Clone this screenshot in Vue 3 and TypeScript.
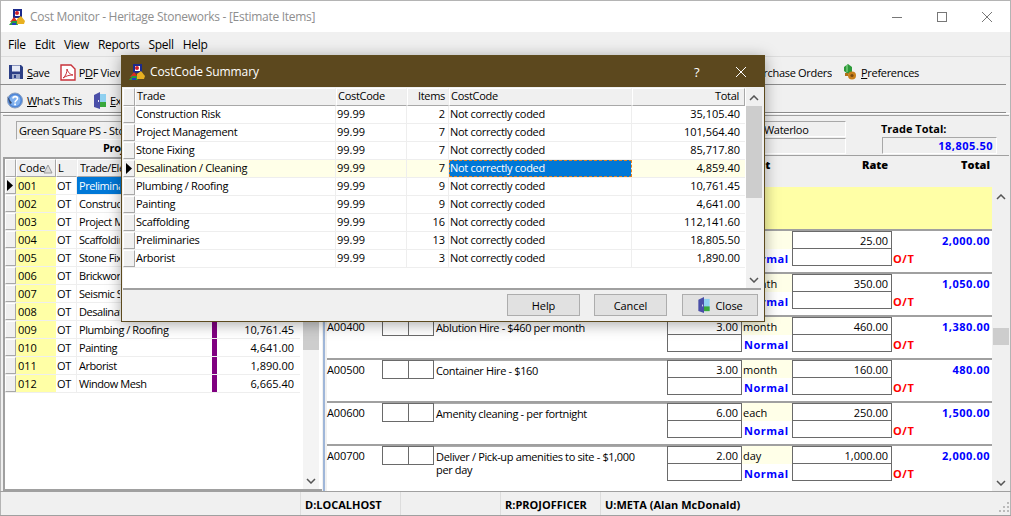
<script setup lang="ts">
interface Trade { code: string; name: string; total: string }
const trades: Trade[] = [
  { code: '001', name: 'Preliminaries', total: '' },
  { code: '002', name: 'Construction Risk', total: '' },
  { code: '003', name: 'Project Management', total: '' },
  { code: '004', name: 'Scaffolding', total: '' },
  { code: '005', name: 'Stone Fixing', total: '' },
  { code: '006', name: 'Brickwork', total: '' },
  { code: '007', name: 'Seismic Strengthening', total: '' },
  { code: '008', name: 'Desalination / Cleaning', total: '' },
  { code: '009', name: 'Plumbing / Roofing', total: '10,761.45' },
  { code: '010', name: 'Painting', total: '4,641.00' },
  { code: '011', name: 'Arborist', total: '1,890.00' },
  { code: '012', name: 'Window Mesh', total: '6,665.40' },
]
interface Item { code: string; desc: string; qty: string; unit: string; rate: string; total: string; flags: boolean }
const items: Item[] = [
  { code: '', desc: '', qty: '', unit: '', rate: '25.00', total: '2,000.00', flags: false },
  { code: '', desc: '', qty: '', unit: 'month', rate: '350.00', total: '1,050.00', flags: false },
  { code: 'A00400', desc: 'Ablution Hire - $460 per month', qty: '3.00', unit: 'month', rate: '460.00', total: '1,380.00', flags: true },
  { code: 'A00500', desc: 'Container Hire - $160', qty: '3.00', unit: 'month', rate: '160.00', total: '480.00', flags: true },
  { code: 'A00600', desc: 'Amenity cleaning - per fortnight', qty: '6.00', unit: 'each', rate: '250.00', total: '1,500.00', flags: true },
  { code: 'A00700', desc: 'Deliver / Pick-up amenities to site - $1,000 per day', qty: '2.00', unit: 'day', rate: '1,000.00', total: '2,000.00', flags: true },
]
interface Summary { trade: string; items: number; total: string }
const summary: Summary[] = [
  { trade: 'Construction Risk', items: 2, total: '35,105.40' },
  { trade: 'Project Management', items: 7, total: '101,564.40' },
  { trade: 'Stone Fixing', items: 7, total: '85,717.80' },
  { trade: 'Desalination / Cleaning', items: 7, total: '4,859.40' },
  { trade: 'Plumbing / Roofing', items: 9, total: '10,761.45' },
  { trade: 'Painting', items: 9, total: '4,641.00' },
  { trade: 'Scaffolding', items: 16, total: '112,141.60' },
  { trade: 'Preliminaries', items: 13, total: '18,805.50' },
  { trade: 'Arborist', items: 3, total: '1,890.00' },
]
</script>

<template>
  <div class="win">
    <header class="title">
      <svg class="appicon" width="16" height="16" viewBox="0 0 16 16"><rect x="4" y="0" width="9" height="9" fill="#1c2a8c"/><rect x="6" y="2" width="5" height="5" fill="#fff"/><circle cx="8" cy="4" r="2" fill="#d0202a"/><path d="M1 13 L5 8 L9 13Z" fill="#d83020"/><path d="M0 16 L3 12 L8 12 L9 16Z" fill="#2a9a40"/><path d="M3 16 h4 v-2 h-4z" fill="#2040c0"/><path d="M8 10 L12 7 L16 12 L15 15 L8 15Z" fill="#e8b020"/></svg>
      <span class="title-text">Cost Monitor - Heritage Stoneworks - [Estimate Items]</span>
      <div class="caps">
        <svg width="12" height="12" viewBox="0 0 12 12"><path d="M1 6.500h10" stroke="#777" fill="none"/></svg>
        <svg width="12" height="12" viewBox="0 0 12 12"><rect x="1.500" y="1.500" width="9" height="9" stroke="#777" fill="none"/></svg>
        <svg width="12" height="12" viewBox="0 0 12 12"><path d="M1 1l10 10M11 1L1 11" stroke="#777" fill="none"/></svg>
      </div>
    </header>

    <nav class="menu">
      <span>File</span><span>Edit</span><span>View</span><span>Reports</span><span>Spell</span><span>Help</span>
    </nav>

    <div class="bar bar1">
      <div class="tool">
        <svg width="16" height="16" viewBox="0 0 16 16"><path d="M1 1h12l2 2v12H1z" fill="#2c3f86"/><rect x="4" y="1.500" width="8" height="6" fill="#e8ecf6"/><rect x="4" y="10" width="8" height="5" fill="#9aa6c8"/><rect x="6" y="11" width="2" height="3" fill="#2c3f86"/></svg>
        <span><u>S</u>ave</span>
      </div>
      <div class="tool pdf">
        <svg width="16" height="17" viewBox="0 0 16 17"><path d="M1 1h10l4 4v11H1z" fill="#fff" stroke="#c8323a" stroke-width="1.400"/><path d="M3 14c3-2 4-6 4-9 1 3 2 5 6 6-4 0-7 1-10 3z" fill="none" stroke="#c8323a"/></svg>
        <span class="clip w-pdf">P<u>D</u>F View</span>
      </div>
      <div class="tool pref">
        <svg width="16" height="17" viewBox="0 0 16 17"><path d="M2 3 L6 0 L10 3 L10 9 L6 10 L2 7Z" fill="#2d9a3a"/><path d="M5 1v7" stroke="#9adf9a"/><circle cx="10" cy="11.500" r="4" fill="#c8801c"/><circle cx="10" cy="11.500" r="1.600" fill="#7a4a10"/><rect x="3" y="9" width="3" height="3" fill="#b07018"/></svg>
        <span><u>P</u>references</span>
      </div>
      <span class="po"><span>Purchase Orders</span></span>
    </div>

    <div class="bar bar2">
      <div class="tool">
        <svg width="18" height="17" viewBox="0 0 18 17"><circle cx="9" cy="8.500" r="7.500" fill="#4f86d8" stroke="#8aa0c0"/><circle cx="9" cy="8.500" r="5.500" fill="#7fb0ee"/><path d="M7 6.500c0-2.500 4.500-2.500 4.500 0 0 2-2.500 2-2.500 4" fill="none" stroke="#fff" stroke-width="1.600"/><rect x="8.200" y="11.500" width="1.800" height="1.800" fill="#fff"/><path d="M1 4l5 7-2 1z" fill="#3a4a6a"/></svg>
        <span><u>W</u>hat's This</span>
      </div>
      <div class="tool exit">
        <svg width="14" height="17" viewBox="0 0 14 17"><rect x="5" y="2" width="8" height="13" fill="#8fd0f0"/><rect x="5" y="10" width="8" height="5" fill="#39a83c"/><path d="M1 3l6-3v17l-6-2z" fill="#4a4fa8"/><rect x="5" y="8" width="1" height="2" fill="#e8e8f8"/></svg>
        <span class="clip w-exit"><u>E</u>xit</span>
      </div>
    </div>

    <main class="content">
      <section class="left">
        <div class="info-left">
          <div class="proj-box"><span class="clip w-proj">Green Square PS - Stonework Restoration</span></div>
          <div class="proj-label"><span class="clip w-pl">Project</span></div>
        </div>
        <div class="lgrid">
          <div class="lrows">
            <div class="lrow lhead">
              <i class="ind raised"></i>
              <b class="c-code raised">Code<svg class="sort" width="10" height="10" viewBox="0 0 10 10"><path d="M5 1L9 9H1z" fill="#ddd" stroke="#999"/></svg></b>
              <b class="c-l raised">L</b>
              <b class="c-trade raised"><span class="clip w-tr">Trade/Element</span></b>
              <b class="c-total raised"></b>
            </div>
            <div v-for="(t, i) in trades" :key="t.code" class="lrow">
              <i class="ind raised"><svg v-if="i === 0" width="7" height="11" viewBox="0 0 7 11"><path d="M0 0l6 5.500L0 11z"/></svg></i>
              <span class="c-code yellow">{{ t.code }}</span>
              <span class="c-l">OT</span>
              <span class="c-trade" :class="{ sel: i === 0 }"><span :class="i < 8 ? 'clip w-tr' : ''">{{ t.name }}</span></span>
              <span class="purple"></span>
              <span class="c-sum">{{ t.total }}</span>
            </div>
          </div>
          <div class="sbar">
            <svg class="arrow" width="10" height="6" viewBox="0 0 10 6"><path d="M1 5l4-4 4 4" stroke="#555" stroke-width="1.500" fill="none"/></svg>
            <div class="lthumb"></div>
            <svg class="arrow bottom" width="10" height="6" viewBox="0 0 10 6"><path d="M1 1l4 4 4-4" stroke="#555" stroke-width="1.500" fill="none"/></svg>
          </div>
        </div>
      </section>

      <section class="right">
        <div class="info-right">
          <div class="site">
            <div class="site-box">Waterloo</div>
            <div class="site-box"></div>
          </div>
          <div class="trade-total">
            <strong>Trade Total:</strong>
            <div class="tt-box">18,805.50</div>
          </div>
        </div>
        <div class="col-heads">
          <strong class="h-unit">Unit</strong>
          <strong class="h-rate">Rate</strong>
          <strong class="h-total">Total</strong>
        </div>
        <div class="rgrid">
          <div class="items">
            <div class="banner"></div>
            <div v-for="it in items" :key="it.rate" class="item">
              <div class="i-code">{{ it.code }}</div>
              <div class="i-flags" :class="{ off: !it.flags }"><span></span><span></span></div>
              <div class="i-desc">{{ it.desc }}</div>
              <div class="i-qty">
                <div class="cell num">{{ it.qty }}</div>
                <div class="cell"></div>
              </div>
              <div class="i-unit">
                <div class="unit">{{ it.unit }}</div>
                <div class="normal">Normal</div>
              </div>
              <div class="i-rate">
                <div class="cell num">{{ it.rate }}</div>
                <div class="cell"></div>
              </div>
              <div class="i-total">
                <div class="amt">{{ it.total }}</div>
                <div class="ot">O/T</div>
              </div>
            </div>
          </div>
          <div class="sbar rsb">
            <svg class="arrow" width="10" height="6" viewBox="0 0 10 6"><path d="M1 5l4-4 4 4" stroke="#555" stroke-width="1.500" fill="none"/></svg>
            <div class="rthumb"></div>
            <svg class="arrow bottom" width="10" height="6" viewBox="0 0 10 6"><path d="M1 1l4 4 4-4" stroke="#555" stroke-width="1.500" fill="none"/></svg>
          </div>
        </div>
      </section>
    </main>

    <footer class="status">
      <span class="s0"></span>
      <span class="s1">D:LOCALHOST</span>
      <span class="s2"></span>
      <span class="s3">R:PROJOFFICER</span>
      <span class="s4">U:META (Alan McDonald)</span>
      <svg class="grip" width="11" height="11" viewBox="0 0 11 11"><g fill="#bbb"><rect x="8" y="0" width="2" height="2"/><rect x="4" y="4" width="2" height="2"/><rect x="8" y="4" width="2" height="2"/><rect x="0" y="8" width="2" height="2"/><rect x="4" y="8" width="2" height="2"/><rect x="8" y="8" width="2" height="2"/></g></svg>
    </footer>

    <div class="dialog">
      <div class="d-title">
        <svg class="appicon" width="16" height="16" viewBox="0 0 16 16"><rect x="4" y="0" width="9" height="9" fill="#1c2a8c"/><rect x="6" y="2" width="5" height="5" fill="#fff"/><circle cx="8" cy="4" r="2" fill="#d0202a"/><path d="M1 13 L5 8 L9 13Z" fill="#d83020"/><path d="M0 16 L3 12 L8 12 L9 16Z" fill="#2a9a40"/><path d="M3 16 h4 v-2 h-4z" fill="#2040c0"/><path d="M8 10 L12 7 L16 12 L15 15 L8 15Z" fill="#e8b020"/></svg>
        <span class="d-name">CostCode Summary</span>
        <span class="d-help">?</span>
        <svg class="d-close" width="12" height="12" viewBox="0 0 12 12"><path d="M1 1l10 10M11 1L1 11" stroke="#fff" fill="none"/></svg>
      </div>
      <div class="d-body">
        <div class="d-rows">
          <div class="drow dhead">
            <i class="ind2 raised"></i>
            <b class="d1 raised">Trade</b>
            <b class="d2 raised">CostCode</b>
            <b class="d3 raised">Items</b>
            <b class="d4 raised">CostCode</b>
            <b class="d5 raised">Total</b>
          </div>
          <div v-for="(s, i) in summary" :key="s.trade" class="drow" :class="{ cur: i === 3 }">
            <i class="ind2 raised"><svg v-if="i === 3" width="7" height="11" viewBox="0 0 7 11"><path d="M0 0l6 5.500L0 11z"/></svg></i>
            <span class="d1">{{ s.trade }}</span>
            <span class="d2 n">99.99</span>
            <span class="d3 n">{{ s.items }}</span>
            <span class="d4" :class="{ dsel: i === 3 }">Not correctly coded</span>
            <span class="d5 n">{{ s.total }}</span>
          </div>
        </div>
        <div class="sbar dsb">
          <svg class="arrow" width="10" height="6" viewBox="0 0 10 6"><path d="M1 5l4-4 4 4" stroke="#555" stroke-width="1.500" fill="none"/></svg>
          <div class="dthumb"></div>
          <svg class="arrow bottom" width="10" height="6" viewBox="0 0 10 6"><path d="M1 1l4 4 4-4" stroke="#555" stroke-width="1.500" fill="none"/></svg>
        </div>
      </div>
      <div class="d-foot">
        <button class="btn">Help</button>
        <button class="btn">Cancel</button>
        <button class="btn close">
          <svg width="14" height="16" viewBox="0 0 14 17"><rect x="5" y="2" width="8" height="13" fill="#8fd0f0"/><rect x="5" y="10" width="8" height="5" fill="#39a83c"/><path d="M1 3l6-3v17l-6-2z" fill="#4a4fa8"/><rect x="5" y="8" width="1" height="2" fill="#e8e8f8"/></svg>
          Close
        </button>
      </div>
    </div>
  </div>
</template>

<style>
html, body { margin: 0; padding: 0; background: #f0f0f0; overflow: hidden; }
</style>

<style scoped>
.win {
  position: relative; width: 1011px; height: 516px; overflow: hidden; background: #f0f0f0;
  display: flex; flex-direction: column; box-sizing: border-box;
  font-family: "Open Sans", "Liberation Sans", sans-serif; font-size: 11px; color: #000; letter-spacing: -.3px;
  outline: 1px solid #b4b4b4; outline-offset: -1px;
}
.clip { display: inline-block; overflow: hidden; white-space: nowrap; vertical-align: top; }
.w-pdf { width: 41px; }
.w-exit { width: 10px; }
.w-proj { width: 102px; }
.w-pl { width: 21px; }
.w-tr { width: 41px; }
.n { letter-spacing: 0; }
.title { height: 32px; background: #fff; display: flex; align-items: center; padding-left: 9px; flex: none; border-top: 1px solid #aaa; box-sizing: border-box; }
.title-text { margin-left: 5px; font-size: 12px; color: #8e8e8e; letter-spacing: -.28px; }
.caps { margin-left: auto; display: flex; gap: 33px; padding-right: 18px; }
.menu { height: 25px; display: flex; align-items: center; padding-left: 8px; gap: 9px; font-size: 12px; flex: none; border-bottom: 1px solid #ddd; box-sizing: border-box; letter-spacing: -.3px; }
.bar { height: 28px; flex: none; display: flex; align-items: center; position: relative; box-sizing: border-box; border-bottom: 1px solid #8c8c8c; margin-right: 5px; font-size: 11px; padding-top: 3px; }
.bar1 { padding-left: 8px; }
.bar2 { padding-left: 6px; }
.tool { display: flex; align-items: center; gap: 3px; }
.pdf { margin-left: 10px; }
.pref { position: absolute; left: 842px; }
.po { position: absolute; left: 765px; width: 67px; overflow: hidden; display: flex; justify-content: flex-end; white-space: nowrap; }
.exit { margin-left: 11px; }
.content { flex: 1; display: flex; min-height: 0; padding-top: 1px; border-top: 1px solid #fff; }
.left { width: 319px; flex: none; margin-left: 3px; display: flex; flex-direction: column; box-sizing: border-box; }
.info-left { height: 42px; flex: none; border-top: 1px solid #a0a0a0; padding: 5px 0 0 13px; box-sizing: border-box; }
.proj-box { width: 300px; height: 19px; line-height: 18px; border: 1px solid #a8a8a8; border-right-color: #fff; border-bottom-color: #fff; box-sizing: border-box; padding-left: 2px; white-space: nowrap; overflow: hidden; }
.proj-label { font-weight: 700; margin-left: 87px; line-height: 15px; }
.lgrid { flex: 1; min-height: 0; display: flex; background: #fff; border: 2px solid #a0a0a0; border-right: 0; box-sizing: border-box; position: relative; }
.lrows { width: 295px; flex: none; }
.lrow { display: flex; height: 18px; line-height: 17px; border-bottom: 1px solid #eee; box-sizing: border-box; white-space: nowrap; }
.lhead { line-height: 16px; border-bottom: 0; }
.raised { background: #f0f0f0; border-right: 1px solid #a8a8a8; border-bottom: 1px solid #a8a8a8; border-left: 1px solid #fff; border-top: 1px solid #fff; box-sizing: border-box; font-weight: 400; font-style: normal; }
.ind { width: 11px; flex: none; display: flex; align-items: center; justify-content: center; }
.c-code { width: 40px; flex: none; padding-left: 2px; box-sizing: border-box; position: relative; display: block; letter-spacing: 0; }
.sort { position: absolute; right: 2px; top: 4px; }
.c-l { width: 21px; flex: none; padding-left: 1px; box-sizing: border-box; border-right: 1px solid #eee; }
.c-trade { width: 135px; flex: none; padding-left: 2px; box-sizing: border-box; overflow: hidden; letter-spacing: -.45px; }
.c-total { flex: 1; }
.yellow { background: #ffffa6; }
.sel { background: #0078d7; color: #fff; }
.purple { width: 5px; flex: none; background: #800080; }
.c-sum { flex: 1; text-align: right; padding-right: 6px; letter-spacing: 0; }
.sbar { flex: none; width: 16px; background: #f0f0f0; position: relative; display: flex; flex-direction: column; align-items: center; box-sizing: border-box; }
.arrow { flex: none; margin-top: 7px; }
.arrow.bottom { margin-top: auto; margin-bottom: 5px; }
.lgrid .sbar { margin-left: 3px; background: #f4f4f4; }
.lthumb { width: 100%; height: 172px; background: #cdcdcd; margin-top: 6px; }
.right { flex: 1; min-width: 0; margin: 0 2px 0 1px; display: flex; flex-direction: column; border-left: 2px solid #9fb6d8; box-sizing: border-box; }
.info-right { height: 41px; flex: none; border-top: 1px solid #a0a0a0; border-bottom: 1px solid #a0a0a0; box-sizing: border-box; padding-top: 5px; display: flex; position: relative; }
.site { margin-left: 436px; width: 85px; }
.site-box { height: 16px; line-height: 15px; border: 1px solid #a8a8a8; border-right-color: #fff; border-bottom-color: #fff; box-sizing: border-box; margin-bottom: 1px; padding-left: 2px; white-space: nowrap; }
.trade-total { margin-left: 36px; width: 115px; }
.trade-total strong { display: block; line-height: 15px; letter-spacing: 0; margin-left: -1px; }
.tt-box { height: 17px; line-height: 16px; border: 1px solid #a8a8a8; border-right-color: #fff; border-bottom-color: #fff; box-sizing: border-box; text-align: right; padding-right: 3px; color: #0000ff; font-weight: 700; letter-spacing: .5px; margin-top: 1px; }
.col-heads { height: 31px; flex: none; position: relative; font-weight: 700; line-height: 16px; letter-spacing: 0; }
.col-heads strong { position: absolute; top: 1px; }
.h-unit { left: 421px; }
.h-rate { left: 537px; }
.h-total { left: 636px; }
.rgrid { flex: 1; min-height: 0; display: flex; }
.items { width: 665px; flex: none; background: #fff; margin-left: 2px; margin-right: 1px; }
.banner { height: 42px; background: #ffffa6; }
.item { height: 43px; border-top: 2px solid #a0a0a0; box-sizing: border-box; display: flex; position: relative; }
.i-code { width: 55px; flex: none; line-height: 16px; padding-top: 2px; letter-spacing: -.1px; }
.i-flags { width: 52px; height: 19px; flex: none; display: flex; border: 1px solid #6a6a6a; box-sizing: border-box; }
.i-flags span { flex: 1; }
.i-flags span:first-child { border-right: 1px solid #6a6a6a; }
.i-flags.off { visibility: hidden; }
.i-desc { width: 233px; flex: none; box-sizing: border-box; padding: 3px 26px 0 2px; line-height: 13px; border-top: 1px solid #a8a8a8; letter-spacing: -.35px; }
.i-qty { width: 75px; flex: none; }
.cell { height: 18px; line-height: 18px; border: 1px solid #6a6a6a; box-sizing: border-box; margin-top: -1px; padding-right: 3px; background: #fff; letter-spacing: 0; }
.cell:first-child { margin-top: 0; }
.num { text-align: right; }
.i-unit { width: 50px; flex: none; }
.unit { height: 18px; line-height: 19px; background: #ffffe8; padding-left: 1px; letter-spacing: 0; }
.normal { color: #0000ff; font-weight: 700; line-height: 19px; padding-left: 2px; letter-spacing: .5px; }
.i-rate { width: 100px; flex: none; }
.i-total { flex: 1; }
.amt { color: #0000ff; font-weight: 700; text-align: right; line-height: 19px; padding-right: 2px; letter-spacing: .5px; }
.ot { color: #ff0000; font-weight: 700; line-height: 17px; padding-left: 1px; letter-spacing: .6px; }
.rsb { background: #f0f0f0; }
.rthumb { width: 100%; height: 17px; background: #cdcdcd; margin-top: 128px; }
.status { height: 25px; flex: none; display: flex; align-items: center; border-top: 1px solid #a0a0a0; border-bottom: 1px solid #a0a0a0; box-sizing: border-box; font-weight: 700; position: relative; letter-spacing: 0; }
.status span { height: 100%; line-height: 25px; padding-left: 4px; box-sizing: border-box; border-right: 1px solid #ddd; }
.s0 { width: 301px; }
.s1 { width: 100px; }
.s2 { width: 100px; }
.s3 { width: 100px; }
.s4 { border-right: 0 !important; }
.grip { position: absolute; right: 1px; bottom: 2px; }

.dialog { position: absolute; left: 121px; top: 55px; width: 644px; height: 267px; background: #f0f0f0; border: 1px solid #5c4a1e; box-sizing: border-box; box-shadow: 0 2px 14px rgba(0,0,0,.35); display: flex; flex-direction: column; }
.d-title { height: 31px; flex: none; background: #5c481e; display: flex; align-items: center; padding-left: 7px; color: #fff; position: relative; }
.d-name { margin-left: 5px; font-size: 12px; letter-spacing: -.1px; }
.d-help { position: absolute; left: 572px; font-size: 13px; }
.d-close { position: absolute; left: 613px; }
.d-body { height: 202px; flex: none; background: #fff; display: flex; margin: 1px 3px 0 1px; border-bottom: 2px solid #a0a0a0; box-sizing: border-box; }
.d-rows { width: 622px; flex: none; }
.drow { display: flex; height: 18px; line-height: 16px; border-bottom: 1px solid #eee; box-sizing: border-box; white-space: nowrap; }
.dhead { line-height: 14px; border-bottom: 0; }
.cur { background: #ffffe8; }
.ind2 { width: 12px; flex: none; display: flex; align-items: center; justify-content: center; }
.d1 { width: 201px; flex: none; padding-left: 1px; box-sizing: border-box; border-right: 1px solid #eee; }
.d2 { width: 71px; flex: none; padding-left: 1px; box-sizing: border-box; border-right: 1px solid #eee; }
.d3 { width: 42px; flex: none; padding-right: 3px; text-align: right; box-sizing: border-box; border-right: 1px solid #eee; }
.d4 { width: 183px; flex: none; padding-left: 1px; box-sizing: border-box; border-right: 1px solid #eee; }
.d5 { flex: 1; text-align: right; padding-right: 5px; box-sizing: border-box; }
.dsel { background: #0078d7; color: #fff; outline: 1px dashed #e08020; outline-offset: -1px; }
.dsb { margin-left: 1px; background: #f0f0f0; }
.dthumb { width: 100%; height: 92px; background: #cdcdcd; margin-top: 5px; }
.d-foot { flex: 1; display: flex; align-items: flex-start; padding: 4px 0 0 385px; box-sizing: border-box; }
.btn { width: 73px; height: 22px; padding: 0; margin: 0 14px 0 0; background: #e1e1e1; border: 1px solid #adadad; font: inherit; letter-spacing: -.1px; color: #000; display: flex; align-items: center; justify-content: center; gap: 4px; }
.btn.close { width: 76px; margin: 0 0 0 1px; }
</style>
